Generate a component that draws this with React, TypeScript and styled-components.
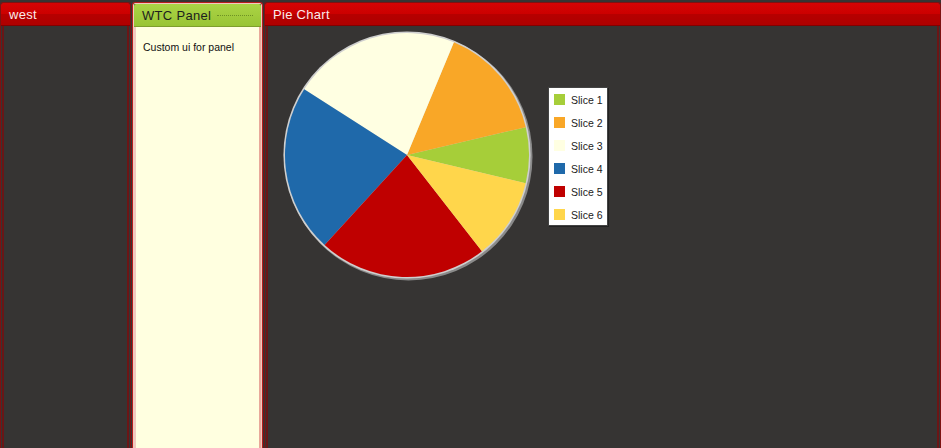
import React from "react";
import styled, { createGlobalStyle } from "styled-components";

const Global = createGlobalStyle`
  html, body { margin: 0; padding: 0; background: #363433; }
  body { font-family: "Liberation Sans", Arial, sans-serif; }
`;

const Layout = styled.div`
  display: flex;
  height: 448px;
  width: 941px;
  background: #363433;
  padding-top: 2px;
  box-sizing: border-box;
  gap: 1px;
  overflow: hidden;
`;

const Panel = styled.section<{ $width?: number; $light?: boolean }>`
  display: flex;
  flex-direction: column;
  ${(p) => (p.$width ? `width: ${p.$width}px; flex: none;` : "flex: 1;")}
  box-sizing: border-box;
  border: 1px solid ${(p) => (p.$light ? "#b81c1c" : "#7c1212")};
  border-bottom: none;
  border-radius: 3px 3px 0 0;
  box-shadow: ${(p) => (p.$light ? "inset 0 0 0 1px #f1c9bf" : "none")};
  overflow: hidden;
`;

const Header = styled.header<{ $green?: boolean }>`
  height: 22px;
  flex: none;
  display: flex;
  align-items: center;
  gap: 6px;
  padding: 0 8px;
  margin: ${(p) => (p.$green ? "1px 1px 0" : "0")};
  border-radius: 2px 2px 0 0;
  font-family: "Liberation Sans", Arial, sans-serif;
  font-size: 13px;
  letter-spacing: 0.3px;
  color: ${(p) => (p.$green ? "#1d1d1d" : "#fbeaea")};
  background: ${(p) =>
    p.$green
      ? "linear-gradient(#aad445 0%, #a2cc3d 50%, #98c435 100%)"
      : "linear-gradient(#d40404 0%, #cc0000 48%, #b60000 52%, #ae0000 100%)"};
  border-bottom: 1px solid ${(p) => (p.$green ? "#7e9e2c" : "#820000")};
`;

const Dots = styled.span`
  flex: 1;
  height: 0;
  border-top: 1px dotted #6f9225;
  margin-top: 1px;
`;

const Body = styled.div<{ $light?: boolean }>`
  flex: 1;
  margin: 0 1px;
  border-left: 2px solid ${(p) => (p.$light ? "#f1c9bf" : "#6a1616")};
  border-right: 2px solid ${(p) => (p.$light ? "#e8a99a" : "#6a1616")};
  background: ${(p) => (p.$light ? "#ffffe0" : "#363433")};
  position: relative;
`;

const PanelText = styled.p`
  margin: 0;
  padding: 14px 0 0 7px;
  font-family: "Liberation Sans", Arial, sans-serif;
  font-size: 10.5px;
  color: #111;
`;

const ChartArea = styled.div`
  display: flex;
  align-items: flex-start;
  padding: 5px 0 0 15px;
  gap: 13px;
`;

const Legend = styled.div`
  margin-top: 56px;
  width: 60px;
  box-sizing: border-box;
  background: #ffffff;
  border: 1px solid #444;
  box-shadow: 1px 1px 0 #222;
  padding: 6px 0 5px 5px;
  display: flex;
  flex-direction: column;
  gap: 12px;
`;

const LegendItem = styled.div`
  display: flex;
  align-items: center;
  gap: 6px;
  height: 11px;
  font-family: "Liberation Sans", Arial, sans-serif;
  font-size: 10.5px;
  color: #222;
`;

const Swatch = styled.span<{ $color: string }>`
  width: 11px;
  height: 11px;
  flex: none;
  background: ${(p) => p.$color};
`;

const slices = [
  { name: "Slice 1", color: "#a6ce39", start: 13.4, end: -13.2 },
  { name: "Slice 2", color: "#f9a727", start: -13.2, end: -67.4 },
  { name: "Slice 3", color: "#ffffe2", start: -67.4, end: -147.4 },
  { name: "Slice 4", color: "#1f69aa", start: -147.4, end: -227.5 },
  { name: "Slice 5", color: "#bf0000", start: -227.5, end: -307.9 },
  { name: "Slice 6", color: "#ffd64b", start: -307.9, end: -346.6 },
];

const CX = 124;
const CY = 124;
const R = 122;

function pt(a: number) {
  const r = (a * Math.PI) / 180;
  return [CX + R * Math.cos(r), CY + R * Math.sin(r)];
}

function slicePath(s: number, e: number) {
  const [x1, y1] = pt(s);
  const [x2, y2] = pt(e);
  const large = Math.abs(s - e) > 180 ? 1 : 0;
  return `M${CX},${CY} L${x1.toFixed(2)},${y1.toFixed(2)} A${R},${R} 0 ${large} 0 ${x2.toFixed(2)},${y2.toFixed(2)} Z`;
}

function Pie() {
  return (
    <svg width="252" height="252" viewBox="0 0 252 252">
      <circle cx={CX + 1.5} cy={CY + 1.5} r={R + 2} fill="#8a8a8a" />
      <circle cx={CX} cy={CY} r={R + 1.6} fill="#cfcfcf" />
      {slices.map((s) => (
        <path key={s.name} d={slicePath(s.start, s.end)} fill={s.color} />
      ))}
    </svg>
  );
}

export default function App() {
  return (
    <>
      <Global />
      <Layout>
        <Panel $width={131}>
          <Header>west</Header>
          <Body />
        </Panel>
        <Panel $width={131} $light>
          <Header $green>
            WTC Panel
            <Dots />
          </Header>
          <Body $light>
            <PanelText>Custom ui for panel</PanelText>
          </Body>
        </Panel>
        <Panel>
          <Header>Pie Chart</Header>
          <Body>
            <ChartArea>
              <Pie />
              <Legend>
                {slices.map((s) => (
                  <LegendItem key={s.name}>
                    <Swatch $color={s.color} />
                    {s.name}
                  </LegendItem>
                ))}
              </Legend>
            </ChartArea>
          </Body>
        </Panel>
      </Layout>
    </>
  );
}
